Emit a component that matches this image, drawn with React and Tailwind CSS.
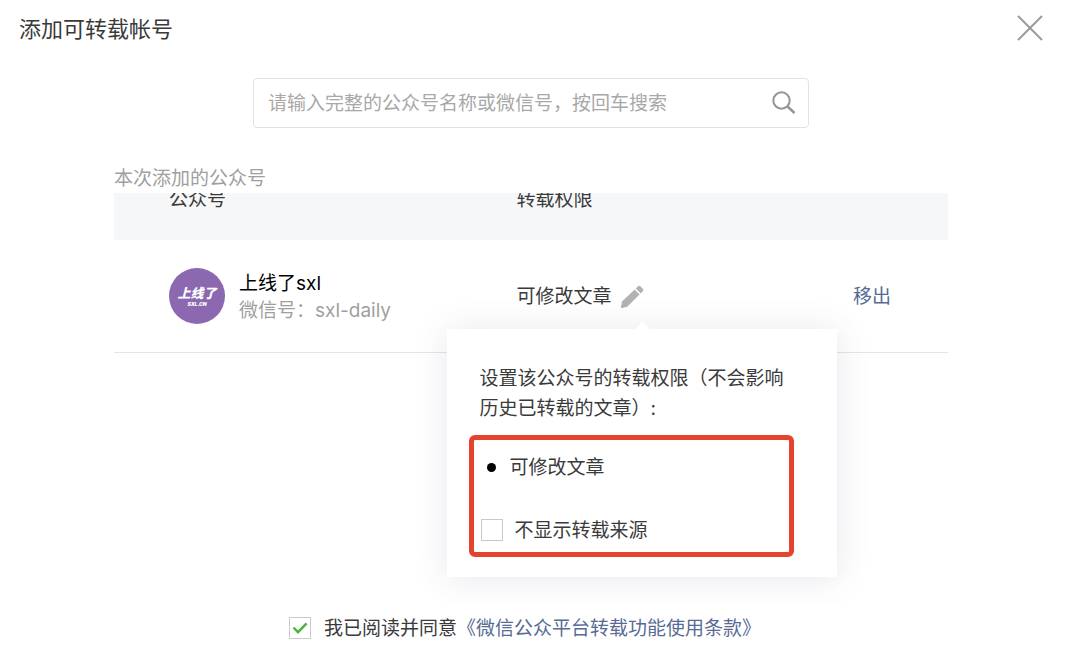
import { useState } from 'react';

const CloseIcon = () => (
  <svg width="26" height="26" viewBox="0 0 26 26" fill="none" stroke="#9b9b9b" strokeWidth="2" aria-hidden="true">
    <path d="M1 1L25 25M25 1L1 25" />
  </svg>
);

const SearchIcon = () => (
  <svg width="24" height="24" viewBox="0 0 24 24" fill="none" stroke="#959595" strokeWidth="2" aria-hidden="true">
    <circle cx="9.5" cy="9.5" r="8.2" />
    <path d="M15.5 15.5L22.5 22" strokeWidth="2.5" />
  </svg>
);

const PencilIcon = () => (
  <svg width="24" height="24" viewBox="0 0 24 24" fill="#b2b2b2" aria-hidden="true">
    <path d="M0.8 23.2L2 16.6L14.6 4.6L19.6 9.6L7.2 21.8Z" />
    <path d="M15.8 3.5L18.3 1.1Q19.3 0.3 20.3 1.2L23 3.9Q23.9 4.9 23 5.9L20.8 8.4Z" />
  </svg>
);

const Avatar = () => (
  <div className="flex h-14 w-14 shrink-0 flex-col items-center justify-center rounded-full bg-[#8b68b0] italic text-white">
    <span className="text-[13px] font-black leading-4">上线了</span>
    <span className="text-[5px] font-black leading-[6px]">SXL.CN</span>
  </div>
);

const Checkbox = ({ id, checked, onChange }) => (
  <span className="relative flex h-[22px] w-[22px] shrink-0">
    <input
      id={id}
      type="checkbox"
      checked={checked}
      onChange={(e) => onChange(e.target.checked)}
      className="h-[22px] w-[22px] appearance-none border border-[#c9c9cd] bg-white"
    />
    {checked && (
      <svg className="pointer-events-none absolute inset-0" width="22" height="22" viewBox="0 0 22 22" fill="none" stroke="#4fb336" strokeWidth="2.4" aria-hidden="true">
        <path d="M4.5 10.5L9 15.2L17.6 6.4" />
      </svg>
    )}
  </span>
);

const PermissionPopover = () => {
  const [hideSource, setHideSource] = useState(false);

  return (
    <div className="absolute -left-[70px] top-[46px] z-10 w-[390px] bg-white pb-5 pl-[22px] pr-[43px] pt-[35px] shadow-[0_2px_32px_rgba(60,70,110,0.13)]">
      <span className="absolute -top-[5px] left-[190px] h-[11px] w-[11px] rotate-45 bg-white" />
      <p className="pl-[11px] leading-[30px]">设置该公众号的转载权限（不会影响历史已转载的文章）:</p>
      <div className="mt-[11px] rounded-md border-[5px] border-[#e5432d] pb-2 pl-[7px] pt-[14px]">
        <ul>
          <li className="flex items-center gap-[14px] pl-[6px] leading-7">
            <span className="h-[9px] w-[9px] rounded-full bg-black" />
            可修改文章
          </li>
        </ul>
        <div className="mt-[34px] flex items-center gap-3 leading-7">
          <Checkbox id="hide-source" checked={hideSource} onChange={setHideSource} />
          <label htmlFor="hide-source" className="pt-0.5 leading-[26px]">不显示转载来源</label>
        </div>
      </div>
    </div>
  );
};

const AccountTable = () => (
  <table className="-mt-[33px] w-full table-fixed text-left">
    <thead className="bg-[#f6f7f9]">
      <tr className="h-20">
        <th className="w-5/12 pl-[55px] font-normal">公众号</th>
        <th className="pl-[55px] font-normal">转载权限</th>
        <th className="w-1/6" aria-label="操作" />
      </tr>
    </thead>
    <tbody>
      <tr className="border-b border-[#e4e4e6]">
        <td className="py-7 pl-[55px]">
          <div className="flex items-center gap-[14px]">
            <Avatar />
            <div className="pt-0.5 leading-[27px]">
              <p className="text-black">上线了sxl</p>
              <p className="text-[#9f9f9f]">微信号：sxl-daily</p>
            </div>
          </div>
        </td>
        <td className="pl-[55px] pt-0.5">
          <div className="relative inline-flex items-center gap-2 leading-7">
            可修改文章
            <button type="button" aria-label="编辑转载权限">
              <PencilIcon />
            </button>
            <PermissionPopover />
          </div>
        </td>
        <td className="pr-[57px] pt-0.5 text-right">
          <a href="#remove" className="text-[#576b95]">移出</a>
        </td>
      </tr>
    </tbody>
  </table>
);

const App = () => {
  const [agreed, setAgreed] = useState(true);

  return (
    <div className="bg-white font-[Inter,'Noto_Sans_CJK_SC',sans-serif] text-[19px] text-[#3a3a3a]">
      <header className="flex h-14 items-center justify-between pl-[19px] pr-[37px]">
        <h1 className="pt-0.5 text-[22px]">添加可转载帐号</h1>
        <button type="button" aria-label="关闭">
          <CloseIcon />
        </button>
      </header>

      <main className="pr-[18px]">
        <form
          onSubmit={(e) => e.preventDefault()}
          className="mx-auto mt-[22px] flex h-[50px] max-w-[556px] items-center rounded border border-[#e2e2e4] pl-[14px] pr-3"
        >
          <input
            type="text"
            aria-label="搜索公众号"
            placeholder="请输入完整的公众号名称或微信号，按回车搜索"
            className="min-w-0 flex-1 pt-0.5 outline-none placeholder:text-[#a8a8a8]"
          />
          <button type="submit" aria-label="搜索">
            <SearchIcon />
          </button>
        </form>

        <section className="mt-[35px] px-[114px]">
          <h2 className="pt-0.5 leading-7 text-[#9f9f9f]">本次添加的公众号</h2>
          <div className="h-[410px] overflow-hidden">
            <AccountTable />
          </div>
        </section>

        <div className="mt-[11px] flex items-center justify-center gap-[13px] pr-3 leading-7">
          <Checkbox id="agree" checked={agreed} onChange={setAgreed} />
          <div className="pt-0.5 leading-[26px]">
            <label htmlFor="agree">我已阅读并同意</label>
            <a href="#terms" className="text-[#576b95]">《微信公众平台转载功能使用条款》</a>
          </div>
        </div>
      </main>
    </div>
  );
};

export default App;
